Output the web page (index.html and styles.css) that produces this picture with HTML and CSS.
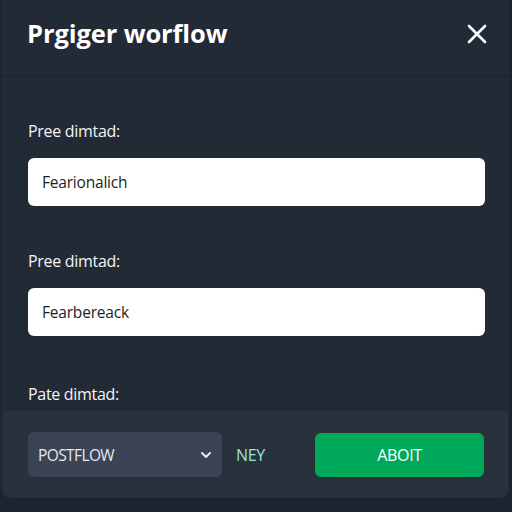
FILE: index.html
```html
<!DOCTYPE html>
<html>
<head>
<meta charset="utf-8">
<link rel="stylesheet" href="styles.css">
</head>
<body>
<div class="dialog">
  <header class="head">
    <h1 class="title">Prgiger worflow</h1>
    <svg class="close" width="20" height="20" viewBox="0 0 20 20"><path d="M2 2L18 18M18 2L2 18" stroke="#fff" stroke-width="2.6" stroke-linecap="round"/></svg>
  </header>
  <div class="body">
    <div class="field">
      <label class="label">Pree dimtad:</label>
      <div class="input">Fearionalich</div>
    </div>
    <div class="field">
      <label class="label">Pree dimtad:</label>
      <div class="input">Fearbereack</div>
    </div>
    <label class="label last">Pate dimtad:</label>
  </div>
  <footer class="foot">
    <div class="select">
      <span>POSTFLOW</span>
      <svg width="12" height="8" viewBox="0 0 12 8"><path d="M2 2L6 6L10 2" stroke="#e6e9ee" stroke-width="2" fill="none" stroke-linecap="round" stroke-linejoin="round"/></svg>
    </div>
    <span class="ney">NEY</span>
    <button class="btn">ABOIT</button>
  </footer>
</div>
</body>
</html>
```
FILE: styles.css
```css
html, body { margin: 0; padding: 0; }
body {
  width: 512px;
  height: 512px;
  background: #1d2330;
  font-family: "Open Sans", "Liberation Sans", sans-serif;
  overflow: hidden;
}
.dialog {
  width: 508px;
  margin-left: 1px;
  height: 498px;
  background: #222a35;
  display: flex;
  flex-direction: column;
  border-radius: 0 0 8px 8px;
}
.head {
  height: 76px;
  box-sizing: border-box;
  border-bottom: 1px solid #1a2029;
  display: flex;
  align-items: center;
  justify-content: space-between;
  padding: 0 22px 10px 26px;
}
.title {
  margin: 0;
  color: #ffffff;
  font-family: "Open Sans", sans-serif;
  font-weight: 700;
  font-size: 25.5px;
  letter-spacing: -0.1px;
}
.close { margin-top: 2px; }
.body {
  flex: 1;
  padding: 0 24px 0 27px;
  display: flex;
  flex-direction: column;
}
.field { display: flex; flex-direction: column; }
.label {
  color: #f2f4f6;
  font-size: 16px;
  line-height: 22px;
  margin-top: 44px;
  letter-spacing: -0.3px;
}
.input {
  margin-top: 16px;
  height: 48px;
  background: #ffffff;
  border-radius: 6px;
  box-sizing: border-box;
  padding: 0 14px;
  display: flex;
  align-items: center;
  font-size: 15.5px;
  color: #1c1f24;
  letter-spacing: -0.2px;
}
.last { margin-top: 47px; }
.foot {
  height: 87px;
  margin: 0 0 0 2px;
  background: #29313c;
  border-radius: 0 0 8px 8px;
  display: flex;
  align-items: center;
  padding: 0 24px 0 25px;
  box-sizing: border-box;
  width: 505px;
}
.select {
  width: 194px;
  height: 45px;
  background: #3a4454;
  border-radius: 6px;
  display: flex;
  align-items: center;
  justify-content: space-between;
  padding: 0 10px 0 10px;
  box-sizing: border-box;
  color: #e6e9ee;
  font-size: 15.5px;
  letter-spacing: -0.6px;
}
.ney {
  margin-left: 14px;
  color: #95e6d6;
  font-size: 16px;
  letter-spacing: -0.4px;
}
.btn {
  margin-left: auto;
  width: 169px;
  height: 44px;
  border: none;
  border-radius: 6px;
  background: #00a85a;
  color: #ffffff;
  font-family: "Open Sans", sans-serif;
  font-size: 16px;
  letter-spacing: -0.3px;
}
```
